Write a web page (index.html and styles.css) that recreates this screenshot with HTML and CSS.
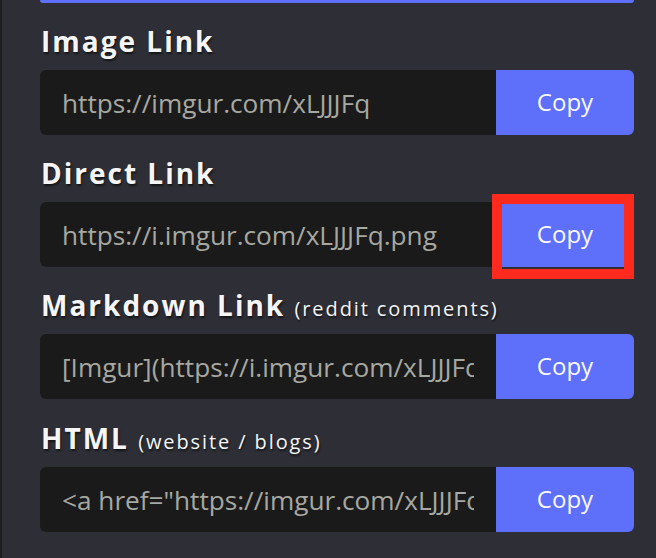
FILE: index.html
```html
<!DOCTYPE html>
<html lang="en">
<head>
<meta charset="utf-8">
<title>Share links</title>
<link rel="stylesheet" href="styles.css">
</head>
<body>
<div class="page">
  <div class="topbar"></div>
  <div class="field">
    <h2 class="label">Image Link</h2>
    <div class="row">
      <input class="link" type="text" readonly value="https://imgur.com/xLJJJFq">
      <button class="copy" type="button">Copy</button>
    </div>
  </div>
  <div class="field">
    <h2 class="label">Direct Link</h2>
    <div class="row">
      <input class="link" type="text" readonly value="https://i.imgur.com/xLJJJFq.png">
      <button class="copy highlight" type="button">Copy</button>
    </div>
  </div>
  <div class="field">
    <h2 class="label">Markdown Link <span class="note">(reddit comments)</span></h2>
    <div class="row">
      <input class="link" type="text" readonly value="[Imgur](https://i.imgur.com/xLJJJFq.png)">
      <button class="copy" type="button">Copy</button>
    </div>
  </div>
  <div class="field">
    <h2 class="label">HTML <span class="note">(website / blogs)</span></h2>
    <div class="row">
      <input class="link" type="text" readonly value="&lt;a href=&quot;https://imgur.com/xLJJJFq&quot;&gt;&lt;img src=&quot;https://i.imgur.com/xLJJJFq.png&quot; title=&quot;source: imgur.com&quot; /&gt;&lt;/a&gt;">
      <button class="copy" type="button">Copy</button>
    </div>
  </div>
</div>
</body>
</html>
```

FILE: styles.css
```css
html, body {
  margin: 0;
  padding: 0;
  background: #2e2f36;
}

.page {
  min-height: 558px;
  box-sizing: border-box;
  border-left: 2px solid #1c1d1c;
  padding: 0 22px 0 38px;
  font-family: "Open Sans", "Noto Sans", sans-serif;
}

.topbar {
  height: 3px;
  background: #5e6ff9;
  border-radius: 0 0 5px 5px;
}

.field {
  margin-top: 19px;
}

.field:last-child {
  margin-top: 20px;
}

.label {
  margin: 0 0 10px 1px;
  font-size: 28px;
  line-height: 38px;
  font-weight: 700;
  letter-spacing: 2px;
  color: #f5f5f5;
  text-shadow: 1px 2px 2px rgba(0, 0, 0, 0.55);
  white-space: nowrap;
}

.note {
  font-size: 20px;
  line-height: 20px;
  font-weight: 400;
  letter-spacing: 1.9px;
}

.row {
  display: flex;
  height: 65px;
}

.link {
  flex: 1;
  min-width: 0;
  box-sizing: border-box;
  height: 100%;
  margin: 0;
  border: none;
  border-radius: 6px 0 0 6px;
  padding: 0 22px;
  background: #1a1a1b;
  color: #a6a8a1;
  font-family: "Open Sans", "Noto Sans", sans-serif;
  font-size: 26.2px;
  outline: none;
}

.copy {
  flex: 0 0 138px;
  height: 100%;
  margin: 0;
  border: none;
  border-radius: 0 6px 6px 0;
  background: #5e6ff9;
  color: #f8f8ff;
  font-family: "Open Sans", "Noto Sans", sans-serif;
  font-size: 24px;
  padding: 0 0 2px;
  cursor: pointer;
}

.highlight {
  position: relative;
}

.highlight::after {
  content: "";
  position: absolute;
  top: -8px;
  left: -4px;
  right: 0;
  bottom: -12px;
  border: 10px solid #fe2a1e;
}
```
